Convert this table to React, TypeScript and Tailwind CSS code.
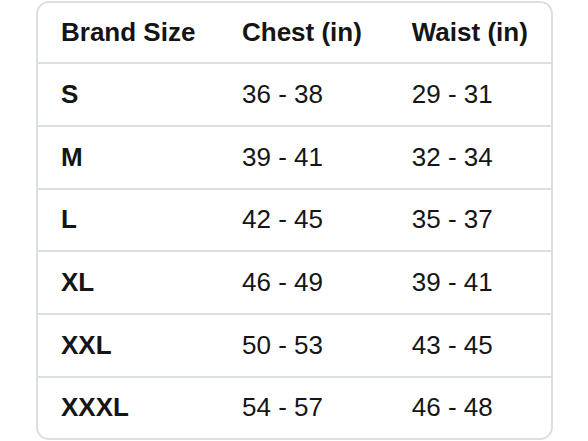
const rows = [
  ["S", "36 - 38", "29 - 31"],
  ["M", "39 - 41", "32 - 34"],
  ["L", "42 - 45", "35 - 37"],
  ["XL", "46 - 49", "39 - 41"],
  ["XXL", "50 - 53", "43 - 45"],
  ["XXXL", "54 - 57", "46 - 48"],
];

export default function App() {
  return (
    <div
      className="min-h-screen bg-white pt-px text-[#151515]"
      style={{ fontFamily: '"Liberation Sans", Arial, sans-serif' }}
    >
      <div className="mx-auto w-[517px] overflow-hidden rounded-[13px] border-2 border-[#dcdfe1] bg-white">
        {/* Header */}
        <div className="flex h-[61px] items-center border-b-2 border-[#dcdfe1] text-[26px] font-bold">
          <div className="w-[182.5px] pl-[23.5px]">Brand Size</div>
          <div className="w-[170.3px] pl-[22px]">Chest (in)</div>
          <div className="flex-1 pl-[21.5px]">Waist (in)</div>
        </div>

        {rows.map((r, i) => (
          <div
            key={r[0]}
            className={`flex items-center text-[26px] ${
              i < rows.length - 1 ? "h-[62.8px] border-b-2 border-[#dcdfe1]" : "h-[60px]"
            }`}
          >
            <div className="w-[182.5px] pl-[23.5px] font-bold">{r[0]}</div>
            <div className="w-[170.3px] pl-[22px]">{r[1]}</div>
            <div className="flex-1 pl-[21.5px]">{r[2]}</div>
          </div>
        ))}
      </div>
    </div>
  );
}
